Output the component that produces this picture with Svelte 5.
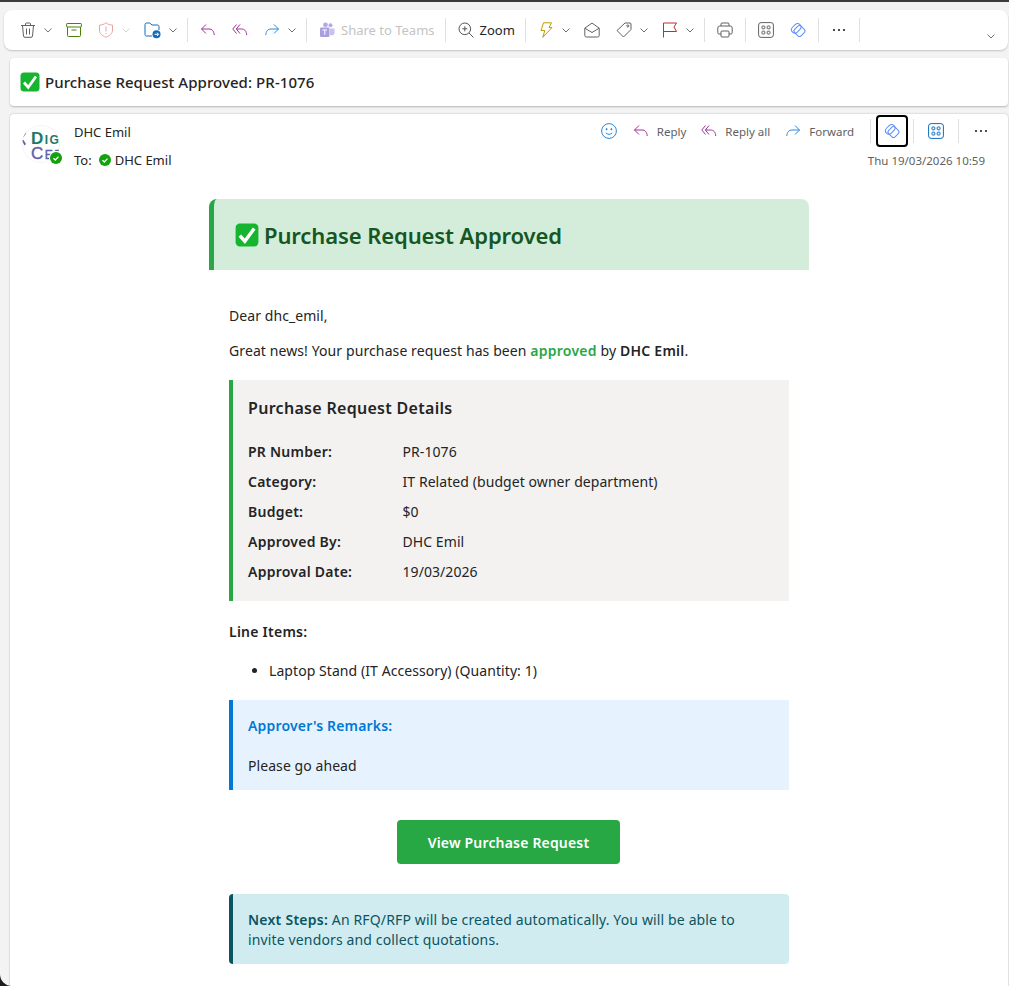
<script>
	const details = [
		['PR Number:', 'PR-1076'],
		['Category:', 'IT Related (budget owner department)'],
		['Budget:', '$0'],
		['Approved By:', 'DHC Emil'],
		['Approval Date:', '19/03/2026']
	];
</script>

{#snippet chev(light = false)}
	<svg class="chev" class:light viewBox="0 0 8 8"><path d="M.5 2.500 4 6l3.500-3.500" /></svg>
{/snippet}

{#snippet reply()}
	<svg class="ico" viewBox="0 0 16 16" stroke="#a0309a"><path d="M6 2.500 1.500 7 6 11.500M1.500 7H9c3 0 5 2 5.200 6" /></svg>
{/snippet}

{#snippet replyAll()}
	<svg class="ico" viewBox="0 0 16 16" stroke="#a0309a"><path d="M4.500 2.500.8 7l3.700 4.500M8 2.500 4.300 7 8 11.500M4.300 7H9.500c3 0 5 2 5.200 6" /></svg>
{/snippet}

{#snippet forward()}
	<svg class="ico" viewBox="0 0 16 16" stroke="#2b88d8"><path d="M10 2.500 14.500 7 10 11.500M14.500 7H7c-3 0-5 2-5.200 6" /></svg>
{/snippet}

{#snippet apps(color)}
	<svg class="ico" viewBox="0 0 16 16" stroke={color}>
		<rect x=".6" y=".6" width="14.800" height="14.800" rx="2.500" />
		<rect x="4" y="4" width="2.800" height="2.800" rx=".6" /><rect x="9.200" y="4" width="2.800" height="2.800" rx=".6" />
		<rect x="4" y="9.200" width="2.800" height="2.800" rx=".6" /><rect x="9.200" y="9.200" width="2.800" height="2.800" rx=".6" />
	</svg>
{/snippet}

{#snippet loop()}
	<svg class="ico" viewBox="0 0 16 16" stroke="#5b8ff9" stroke-width="1.300">
		<rect x="5" y="4.500" width="9" height="9" rx="2.200" transform="rotate(45 9.500 9)" />
		<rect x="1" y="3" width="10.500" height="6.800" rx="3.400" transform="rotate(-45 6.200 6.400)" />
	</svg>
{/snippet}

{#snippet dots()}
	<svg class="ico" viewBox="0 0 16 16" stroke="none"><circle cx="3" cy="8" r="1.100" fill="#242424" /><circle cx="8" cy="8" r="1.100" fill="#242424" /><circle cx="13" cy="8" r="1.100" fill="#242424" /></svg>
{/snippet}

{#snippet tick(cls)}
	<svg class={cls} viewBox="0 0 20 20">
		<rect x=".5" y=".5" width="19" height="19" rx="3.500" fill="#16b52f" />
		<path d="M4 10.500 8.200 15.200 16 4.500" fill="none" stroke="#fff" stroke-width="2.800" />
	</svg>
{/snippet}

<div class="window">
	<div class="topline"></div>

	<div class="toolbar">
		<span class="split">
			<svg class="ico" viewBox="0 0 16 16" stroke="#616161"><path d="M1 3.500h14M5.500 3.500V2a1 1 0 0 1 1-1h3a1 1 0 0 1 1 1v1.500M2.500 3.500l1 10.500a1.500 1.500 0 0 0 1.500 1.300h6a1.500 1.500 0 0 0 1.500-1.300l1-10.500M6.500 6.500v6M9.500 6.500v6" /></svg>
			{@render chev()}
		</span>
		<svg class="ico" viewBox="0 0 16 16" stroke="#498205"><rect x=".6" y="1.500" width="14.800" height="3.500" rx=".6" /><path d="M1.500 5v8.500a1 1 0 0 0 1 1h11a1 1 0 0 0 1-1V5M5.500 8h5" /></svg>
		<span class="split">
			<svg class="ico" viewBox="0 0 16 16" stroke="#e8a3a3"><path d="M8 .8c2 1.600 4 2.200 6.500 2.300V8c0 3.500-2.500 5.800-6.500 7.200C4 13.800 1.500 11.500 1.500 8V3.100C4 3 6 2.400 8 .8zM8 4.500v5M8 11v1" /></svg>
			{@render chev(true)}
		</span>
		<span class="split">
			<svg class="ico wide" viewBox="0 0 17 16" stroke="#0f6cbd">
				<path d="M8 14H2.500A1.500 1.500 0 0 1 1 12.500v-10A1.500 1.500 0 0 1 2.500 1h3.300L8 3h5.500A1.500 1.500 0 0 1 15 4.500V8" />
				<circle cx="12.500" cy="12.300" r="4" fill="#0f6cbd" stroke="none" />
				<path d="M10.500 12.300h4M13 10.600l1.600 1.700-1.600 1.700" stroke="#fff" />
			</svg>
			{@render chev()}
		</span>
		<i class="sep"></i>
		{@render reply()}
		{@render replyAll()}
		<span class="split">
			{@render forward()}
			{@render chev()}
		</span>
		<i class="sep"></i>
		<span class="labelled muted">
			<svg class="ico" viewBox="0 0 16 16" stroke="none"><circle cx="11.500" cy="3.300" r="2" fill="#b4a8e8" /><circle cx="6.500" cy="2.800" r="2.400" fill="#b4a8e8" /><path d="M11 6.500h4.500V11a2.500 2.500 0 0 1-4.500 1.500z" fill="#c9c2f0" /><rect x="1" y="5.500" width="9.500" height="9.500" rx="1.200" fill="#a79fe0" /><path d="M3.500 8h4.500M5.800 8v4.800" stroke="#fff" /></svg>
			Share to Teams
		</span>
		<i class="sep"></i>
		<span class="labelled">
			<svg class="ico" viewBox="0 0 16 16" stroke="#555"><circle cx="6.800" cy="6.800" r="5.800" /><path d="M11 11l4.500 4.500M4.300 6.800h5M6.800 4.300v5" /></svg>
			Zoom
		</span>
		<i class="sep"></i>
		<span class="split">
			<svg class="ico" viewBox="0 0 16 16" stroke="#c19c00"><path d="M5.500.8h8L11 5.500h3L4.800 15.300 6.800 8.500H3z" /></svg>
			{@render chev()}
		</span>
		<svg class="ico" viewBox="0 0 16 16" stroke="#616161"><path d="M.8 6.200 8 1l7.200 5.200v7.300a1.500 1.500 0 0 1-1.500 1.500H2.300a1.500 1.500 0 0 1-1.500-1.500zM.8 6.200 8 10.500l7.200-4.300" /></svg>
		<span class="split">
			<svg class="ico" viewBox="0 0 16 16" stroke="#616161"><path d="M9 1h5a1 1 0 0 1 1 1v5.500L7.500 15 1 8.500zM11.800 3a1 1 0 1 0 .1 0z" /></svg>
			{@render chev()}
		</span>
		<span class="split">
			<svg class="ico" viewBox="0 0 16 16" stroke="#bc2f32"><path d="M1.500 15.500V1h13l-2.500 4 2.500 4.500H1.500" /></svg>
			{@render chev()}
		</span>
		<i class="sep"></i>
		<svg class="ico" viewBox="0 0 16 16" stroke="#616161"><path d="M4 4V2a1 1 0 0 1 1-1h6a1 1 0 0 1 1 1v2M4 12H2a1.200 1.200 0 0 1-1.200-1.200V6A2 2 0 0 1 2.800 4h10.400a2 2 0 0 1 2 2v4.800A1.200 1.200 0 0 1 14 12h-2" /><rect x="4" y="9" width="8" height="6" rx="1" /></svg>
		<i class="sep"></i>
		{@render apps('#616161')}
		{@render loop()}
		<i class="sep"></i>
		{@render dots()}
		<i class="sep"></i>
		<span class="collapse">{@render chev()}</span>
	</div>

	<div class="subject">
		{@render tick('tick-sm')}
		<span>Purchase Request Approved: PR-1076</span>
	</div>

	<div class="pane">
		<header class="msg-head">
			<div class="avatar-wrap">
				<div class="avatar">
					<svg class="logo-mark" viewBox="0 0 4 14"><path d="M2.500 0 4 1.500 1.500 5 0 4.500zM0 8.500 1.500 8 4 12l-1.500 1.500z" fill="#5e62ae" /></svg>
					<span class="digi">Digi</span>
					<span class="cert">Cert</span>
				</div>
				<span class="presence"><svg viewBox="0 0 12 12"><path d="M3.500 6.200 5.300 8l3.200-3.400" /></svg></span>
			</div>
			<div class="who">
				<div>DHC Emil</div>
				<div class="to">
					To:
					<span class="dot"><svg viewBox="0 0 12 12"><path d="M3.500 6.200 5.300 8l3.200-3.400" /></svg></span>
					DHC Emil
				</div>
			</div>
			<div class="right">
				<div class="actions">
					<svg class="ico" viewBox="0 0 16 16" stroke="#2b88d8"><circle cx="8" cy="8" r="7.400" /><path d="M4.800 9.800c1.600 2 4.800 2 6.400 0" /><circle cx="5.600" cy="6.200" r=".6" fill="#2b88d8" /><circle cx="10.400" cy="6.200" r=".6" fill="#2b88d8" /></svg>
					<span class="act">{@render reply()}Reply</span>
					<span class="act">{@render replyAll()}Reply all</span>
					<span class="act last">{@render forward()}Forward</span>
					<i class="sep"></i>
					<span class="focus">{@render loop()}</span>
					<i class="sep"></i>
					{@render apps('#0f6cbd')}
					<i class="sep"></i>
					{@render dots()}
				</div>
				<div class="date">Thu 19/03/2026 10:59</div>
			</div>
		</header>

		<main class="mail">
			<div class="banner">
				{@render tick('tick-lg')}
				<h1>Purchase Request Approved</h1>
			</div>

			<div class="content">
				<p class="dear">Dear dhc_emil,</p>
				<p class="lead">Great news! Your purchase request has been <b class="ok">approved</b> by <b>DHC Emil</b>.</p>

				<section class="details">
					<h2>Purchase Request Details</h2>
					{#each details as [label, value]}
						<div class="row"><b>{label}</b><span>{value}</span></div>
					{/each}
				</section>

				<p class="items-title"><b>Line Items:</b></p>
				<ul><li>Laptop Stand (IT Accessory) (Quantity: 1)</li></ul>

				<section class="remarks">
					<h3>Approver's Remarks:</h3>
					<p>Please go ahead</p>
				</section>

				<div class="cta"><span class="btn">View Purchase Request</span></div>

				<section class="next">
					<b>Next Steps:</b> An RFQ/RFP will be created automatically. You will be able to invite vendors and collect quotations.
				</section>
			</div>
		</main>
	</div>
</div>

<style>
	:global(body) {
		margin: 0;
		height: 986px;
		overflow: hidden;
		background: #1c1c1c;
		font-family: "Noto Sans", "Open Sans", sans-serif;
		color: #242424;
	}

	.window {
		height: 986px;
		overflow: hidden;
		background: #f3f3f3;
		border-radius: 0 0 0 12px;
	}

	.topline {
		height: 2px;
		background: #3b3b3b;
	}

	.ico {
		width: 16px;
		height: 16px;
		margin: 0 2px;
		flex: none;
		fill: none;
		stroke-width: 1;
		overflow: visible;
	}

	.ico.wide {
		width: 17px;
	}

	.chev {
		width: 8px;
		height: 8px;
		flex: none;
		fill: none;
		stroke: #616161;
		stroke-width: 0.9;
	}

	.chev.light {
		stroke: #d0d0d0;
	}

	.sep {
		width: 1px;
		align-self: center;
		height: 24px;
		margin: 0 -2px;
		background: #e0e0e0;
		flex: none;
	}

	.split {
		display: flex;
		align-items: center;
		gap: 6px;
	}

	.toolbar {
		display: flex;
		align-items: center;
		gap: 12px;
		height: 40px;
		margin: 8px 1px 0 4px;
		padding-left: 14px;
		background: #fff;
		border-radius: 8px;
		box-shadow: 0 1px 2px rgba(0, 0, 0, 0.2);
		font-size: 13px;
	}

	.labelled {
		display: flex;
		align-items: center;
		gap: 4px;
	}

	.muted {
		color: #c4c4c4;
	}

	.collapse {
		display: flex;
		margin: 12px 13px 0 auto;
	}

	.subject {
		display: flex;
		align-items: center;
		gap: 5px;
		height: 48px;
		margin: 8px 1px 0 10px;
		padding-left: 10px;
		background: #fff;
		border-radius: 4px;
		box-shadow: 0 1px 2px rgba(0, 0, 0, 0.25);
		font-size: 15px;
		font-weight: 500;
		letter-spacing: 0.07px;
	}

	.tick-sm {
		width: 20px;
		height: 20px;
	}

	.tick-lg {
		width: 24px;
		height: 24px;
		flex: none;
	}

	.pane {
		margin: 8px 1px 0 10px;
		height: 890px;
		background: #fff;
		border-radius: 4px 4px 0 0;
		box-shadow: 0 0 2px rgba(0, 0, 0, 0.25);
	}

	.msg-head {
		display: flex;
		height: 85px;
		font-size: 13px;
	}

	.avatar-wrap {
		position: relative;
		width: 38px;
		height: 38px;
		margin: 11px 14px 0 12px;
		flex: none;
	}

	.avatar {
		position: relative;
		width: 100%;
		height: 100%;
		border-radius: 50%;
		overflow: hidden;
		background: #fff;
		box-shadow: inset 0 0 0 1px #f4f4f4;
		font-family: "Liberation Sans", sans-serif;
		font-variant: small-caps;
		font-weight: 700;
		line-height: 15px;
		font-size: 17px;
		letter-spacing: 1.500px;
		white-space: nowrap;
	}

	.logo-mark {
		position: absolute;
		left: 0;
		top: 7px;
		width: 4px;
		height: 14px;
	}

	.digi {
		display: block;
		padding: 6px 0 0 9px;
		color: #1c7a6c;
	}

	.cert {
		display: block;
		padding-left: 9px;
		color: #5e62ae;
		font-weight: 400;
		-webkit-text-stroke: 0.4px #5e62ae;
	}

	.presence,
	.dot {
		display: inline-flex;
		border-radius: 50%;
		background: #13a10e;
	}

	.presence {
		position: absolute;
		right: -2px;
		bottom: -1px;
		width: 12px;
		height: 12px;
		box-shadow: 0 0 0 1px #fff;
	}

	.dot {
		width: 12px;
		height: 12px;
		margin: 0 3px 0 6px;
	}

	.presence svg,
	.dot svg {
		fill: none;
		stroke: #fff;
		stroke-width: 1.300;
	}

	.who {
		display: flex;
		flex-direction: column;
		gap: 10px;
		padding-top: 9px;
		line-height: 18px;
	}

	.to {
		display: flex;
		align-items: center;
		gap: 1px;
	}

	.right {
		margin-left: auto;
		display: flex;
		flex-direction: column;
		align-items: flex-end;
		padding-right: 17px;
	}

	.actions {
		display: flex;
		align-items: center;
		height: 32px;
		margin-top: 1px;
		gap: 12px;
		font-size: 11.500px;
		color: #616161;
	}

	.actions .sep {
		margin: 0;
	}

	.act {
		display: flex;
		align-items: center;
		gap: 6px;
		margin-right: 1px;
	}

	.act.last {
		margin-right: 4px;
	}

	.focus {
		display: flex;
		align-items: center;
		justify-content: center;
		width: 32px;
		height: 32px;
		box-sizing: border-box;
		border: 2px solid #000;
		border-radius: 4px;
		margin: 0 -7px;
	}

	.date {
		margin: 6px 6px 0 0;
		font-size: 11.500px;
		color: #616161;
	}

	.mail {
		width: 600px;
		margin-left: 199px;
		font-size: 14px;
		line-height: 20px;
		letter-spacing: 0.07px;
	}

	.banner {
		display: flex;
		align-items: center;
		gap: 5px;
		height: 71px;
		box-sizing: border-box;
		padding-left: 21px;
		border-left: 5px solid #28a745;
		border-radius: 8px 8px 0 0;
		background: #d4edda;
	}

	h1 {
		margin: 0;
		font-size: 22px;
		font-weight: 600;
		letter-spacing: -0.1px;
		color: #155724;
	}

	.content {
		padding: 36px 20px 0;
	}

	p {
		margin: 0;
	}

	.lead {
		margin: 15px 0 19px;
		letter-spacing: 0.1px;
	}

	b {
		font-weight: 600;
		letter-spacing: 0.25px;
	}

	.ok {
		color: #28a745;
	}

	.details {
		height: 221px;
		box-sizing: border-box;
		padding: 16px 15px 0;
		border-left: 4px solid #28a745;
		background: #f3f2f1;
	}

	h2 {
		margin: 0 0 17px;
		font-size: 16px;
		line-height: 24px;
		font-weight: 600;
		letter-spacing: 0.3px;
	}

	.row {
		display: flex;
		height: 30px;
		line-height: 30px;
	}

	.row b {
		width: 154.500px;
		flex: none;
	}

	.items-title {
		margin-top: 21px;
	}

	ul {
		margin: 19px 0;
		padding-left: 40px;
	}

	.remarks {
		height: 90px;
		box-sizing: border-box;
		padding: 16px 15px 0;
		border-left: 4px solid #0078d4;
		background: #e6f3ff;
	}

	h3 {
		margin: 0 0 20px;
		font-size: 14px;
		line-height: 20px;
		font-weight: 600;
		letter-spacing: 0.17px;
		color: #0078d4;
	}

	.cta {
		display: flex;
		justify-content: center;
		margin: 30px 1px 30px 0;
	}

	.btn {
		display: flex;
		align-items: center;
		justify-content: center;
		width: 223px;
		height: 44px;
		padding-top: 1px;
		box-sizing: border-box;
		border-radius: 4px;
		background: #28a745;
		color: #fff;
		font-weight: 600;
		letter-spacing: 0.18px;
	}

	.next {
		height: 70px;
		box-sizing: border-box;
		padding: 16px 15px 0;
		border-left: 4px solid #0c5460;
		border-radius: 4px;
		background: #d1ecf1;
		color: #0c5460;
		letter-spacing: 0.14px;
	}
</style>
